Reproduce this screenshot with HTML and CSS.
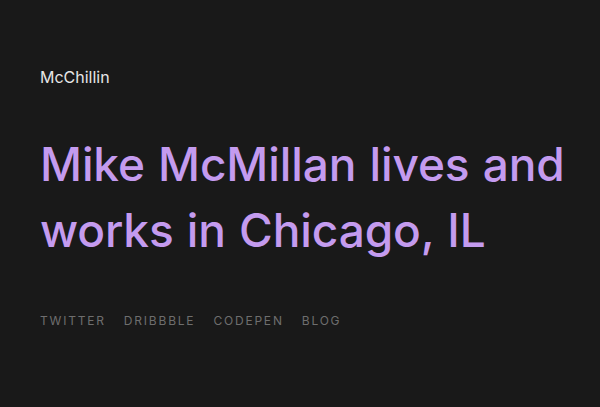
FILE: index.html
```html
<!DOCTYPE html>
<html>
<head>
<meta charset="utf-8">
<link rel="stylesheet" href="styles.css">
</head>
<body>
<main class="page">
  <header class="brand">McChillin</header>
  <h1 class="headline">Mike McMillan lives and works in Chicago, IL</h1>
  <nav class="links">
    <a href="#">Twitter</a>
    <a href="#">Dribbble</a>
    <a href="#">Codepen</a>
    <a href="#">Blog</a>
  </nav>
</main>
</body>
</html>
```

FILE: styles.css
```css
html, body {
  margin: 0;
  padding: 0;
  background: #191919;
  height: 100%;
}
.page {
  padding: 67px 0 0 40px;
  font-family: Inter, "Noto Sans", sans-serif;
}
.brand {
  color: #e6e6e6;
  font-size: 16px;
  line-height: 20px;
}
.headline {
  margin: 44px 0 0 0;
  color: #c49bef;
  font-size: 46px;
  font-weight: 500;
  line-height: 66px;
  letter-spacing: -0.1px;
  word-spacing: 1px;
  max-width: 540px;
}
.links {
  margin-top: 50px;
  display: flex;
  gap: 18px;
}
.links a {
  color: #6e6e6e;
  text-decoration: none;
  text-transform: uppercase;
  font-size: 12px;
  letter-spacing: 1.8px;
}
```
